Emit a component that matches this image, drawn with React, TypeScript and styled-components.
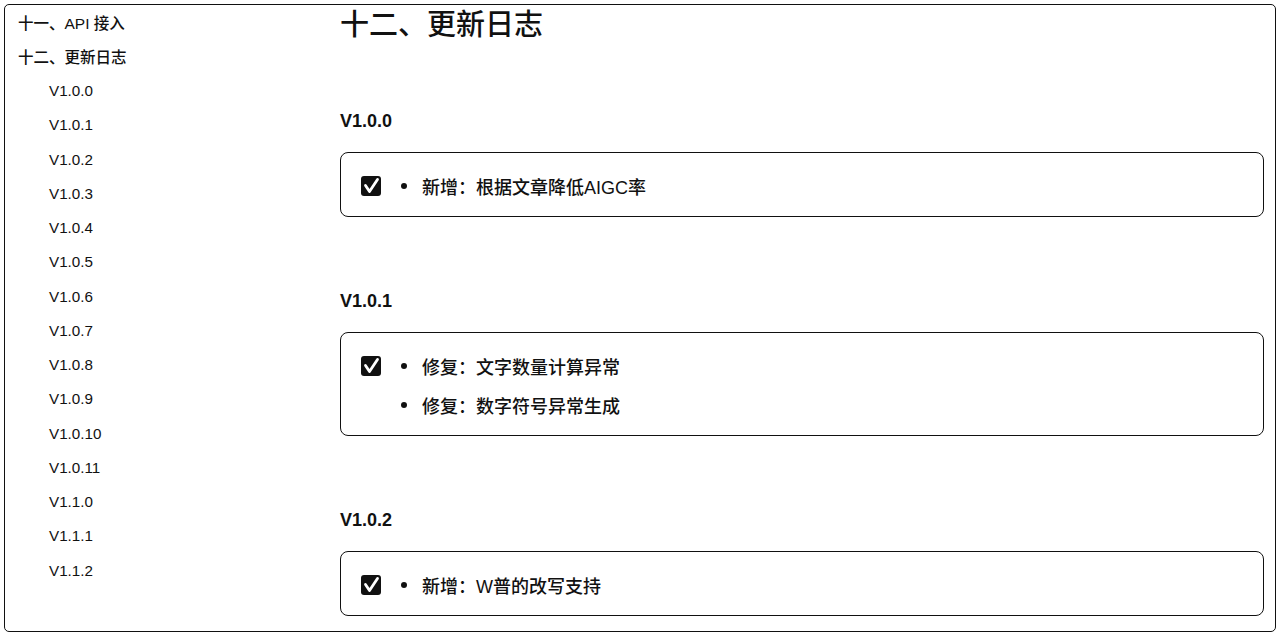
import React from "react";
import styled, { createGlobalStyle } from "styled-components";

const GlobalStyle = createGlobalStyle`
  html, body { margin: 0; padding: 0; background: #fff; }
  body { font-family: "Liberation Sans", "Noto Sans CJK SC", sans-serif; color: #111; }
`;

const Frame = styled.div`
  box-sizing: border-box;
  margin: 4px;
  height: 628px;
  border: 1px solid #111;
  border-radius: 5px;
  display: flex;
  overflow: hidden;
`;

const Sidebar = styled.nav`
  width: 335px;
  flex-shrink: 0;
  display: flex;
  flex-direction: column;
`;

const NavItem = styled.div<{ $level: number }>`
  height: 34.25px;
  display: flex;
  align-items: center;
  padding-left: ${(p) => (p.$level === 0 ? 13 : 44)}px;
  font-size: ${(p) => (p.$level === 0 ? 15.5 : 15.2)}px;
  font-weight: ${(p) => (p.$level === 0 ? 500 : 400)};
  white-space: nowrap;
`;

const Main = styled.main`
  flex: 1;
  padding-right: 11px;
  display: flex;
  flex-direction: column;
`;

const Title = styled.h1`
  margin: 0;
  font-size: 29px;
  line-height: 40px;
  font-weight: 500;
`;

const Version = styled.h3<{ $first?: boolean }>`
  margin: ${(p) => (p.$first ? 64 : 72)}px 0 19px;
  font-size: 18px;
  line-height: 24px;
  font-weight: 700;
`;

const Card = styled.div`
  border: 1px solid #111;
  border-radius: 8px;
  padding: 13px 20px 11px;
  display: flex;
  align-items: flex-start;
`;

const CheckWrap = styled.div`
  height: 39px;
  display: flex;
  align-items: center;
`;

const List = styled.ul`
  list-style: none;
  margin: 0 0 0 20px;
  padding: 0;
`;

const Item = styled.li`
  position: relative;
  height: 39px;
  display: flex;
  align-items: center;
  padding-left: 21px;
  font-size: 18px;
  font-weight: 500;
  white-space: nowrap;
  &::before {
    content: "";
    position: absolute;
    left: 0;
    top: 50%;
    width: 6px;
    height: 6px;
    margin-top: -3px;
    border-radius: 50%;
    background: #111;
  }
`;

const CheckBox = () => (
  <svg width="20" height="20" viewBox="0 0 20 20">
    <rect x="0" y="0" width="20" height="20" rx="3" fill="#111" />
    <path d="M4.5 9.5 L8.5 15.5 L16.5 3.5" fill="none" stroke="#fff" strokeWidth="2.8" strokeLinecap="round" strokeLinejoin="round" />
  </svg>
);

const nav = [
  { t: "十一、API 接入", l: 0 },
  { t: "十二、更新日志", l: 0 },
  ...[
    "V1.0.0", "V1.0.1", "V1.0.2", "V1.0.3", "V1.0.4", "V1.0.5", "V1.0.6",
    "V1.0.7", "V1.0.8", "V1.0.9", "V1.0.10", "V1.0.11", "V1.1.0", "V1.1.1", "V1.1.2",
  ].map((t) => ({ t, l: 1 })),
];

const logs = [
  { v: "V1.0.0", items: ["新增：根据文章降低AIGC率"] },
  { v: "V1.0.1", items: ["修复：文字数量计算异常", "修复：数字符号异常生成"] },
  { v: "V1.0.2", items: ["新增：W普的改写支持"] },
];

export default function App() {
  return (
    <>
      <GlobalStyle />
      <Frame>
        <Sidebar>
          {nav.map((n) => (
            <NavItem key={n.t} $level={n.l}>{n.t}</NavItem>
          ))}
        </Sidebar>
        <Main>
          <Title>十二、更新日志</Title>
          {logs.map((g, i) => (
            <React.Fragment key={g.v}>
              <Version $first={i === 0}>{g.v}</Version>
              <Card>
                <CheckWrap><CheckBox /></CheckWrap>
                <List>
                  {g.items.map((it) => (
                    <Item key={it}>{it}</Item>
                  ))}
                </List>
              </Card>
            </React.Fragment>
          ))}
        </Main>
      </Frame>
    </>
  );
}
